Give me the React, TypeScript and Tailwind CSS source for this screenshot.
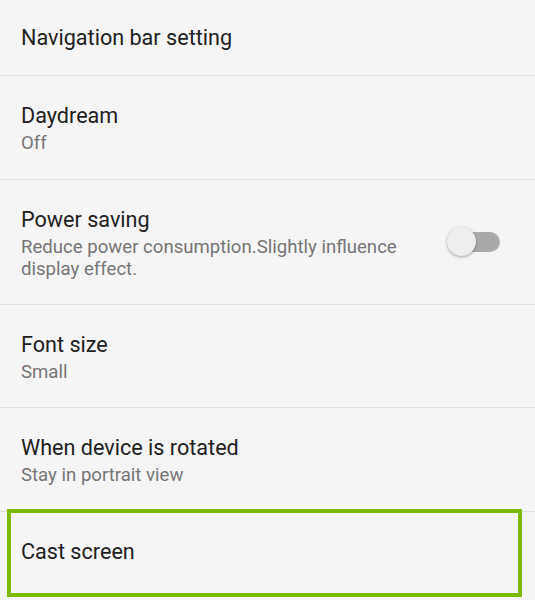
import React from "react";

function Row({
  title,
  sub,
  className,
  children,
}: {
  title: string;
  sub?: React.ReactNode;
  className: string;
  children?: React.ReactNode;
}) {
  return (
    <div className={`flex items-center border-b border-[#e0e0e0] pl-[21px] pr-[35px] ${className}`}>
      <div className={sub ? "flex-1 pt-[2px]" : "flex-1"}>
        <div className="text-[21.6px] leading-[26px] text-[#212121]">{title}</div>
        {sub && <div className="mt-[3px] text-[18.6px] leading-[22px] text-[#757575]">{sub}</div>}
      </div>
      {children}
    </div>
  );
}

export default function App() {
  return (
    <div
      className="min-h-screen w-full bg-[#f5f5f5]"
      style={{ fontFamily: "Roboto, 'Noto Sans', sans-serif" }}
    >
      <Row title="Navigation bar setting" className="h-[76px]" />
      <Row title="Daydream" sub="Off" className="h-[104px]" />
      <Row
        title="Power saving"
        sub={
          <>
            Reduce power consumption.Slightly influence
            <br />
            display effect.
          </>
        }
        className="h-[125px]"
      >
        <div className="relative h-[30px] w-[53px]">
          <div className="absolute right-0 top-[5px] h-[20px] w-[44px] rounded-full bg-[#a9a9a9]" />
          <div className="absolute left-0 top-0 h-[29px] w-[29px] rounded-full bg-[#eeeeee] shadow-[0_1px_3px_rgba(0,0,0,0.35)]" />
        </div>
      </Row>
      <Row title="Font size" sub="Small" className="h-[103px]" />
      <Row title="When device is rotated" sub="Stay in portrait view" className="h-[104px]" />
      <div className="relative flex h-[80px] items-center pl-[21px]">
        <div className="text-[21.6px] leading-[26px] text-[#212121]">Cast screen</div>
        <div className="absolute left-[7px] top-[-3px] h-[88px] w-[515px] border-[4px] border-[#7aba00]" />
      </div>
    </div>
  );
}
